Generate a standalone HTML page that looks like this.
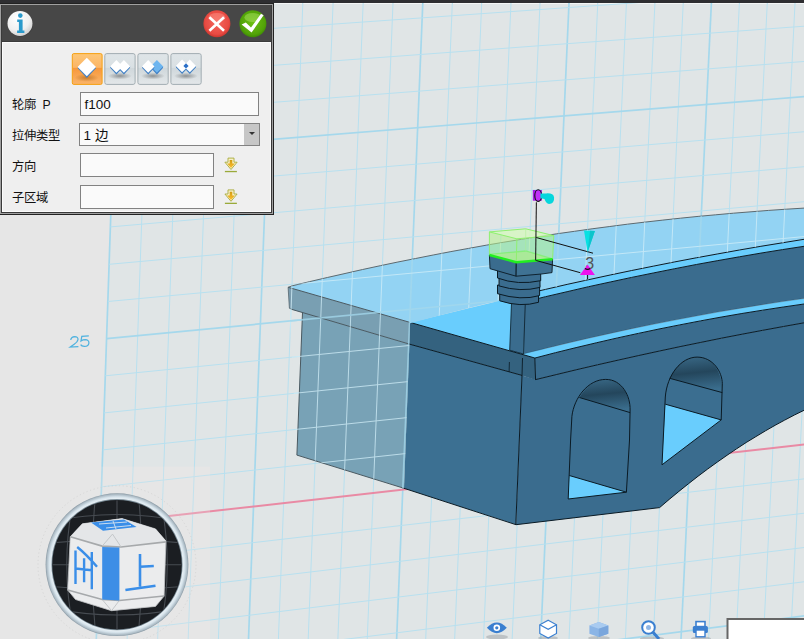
<!DOCTYPE html>
<html lang="zh-CN"><head><meta charset="utf-8">
<style>
html,body{margin:0;padding:0;width:804px;height:639px;overflow:hidden;background:#2e2e30;font-family:"Liberation Sans",sans-serif;}
#scene{position:absolute;left:0;top:0;}
#panel{position:absolute;left:0;top:3px;width:274px;height:212px;box-sizing:border-box;background:#222;}
#panel .g{position:absolute;left:1px;top:1px;right:1px;bottom:1px;background:#8e8e8e;}
#panel .d{position:absolute;left:2px;top:2px;right:2px;bottom:2px;background:#333;}
#panel .hdr{position:absolute;left:2px;top:2px;width:268px;height:36px;background:#474747;}
#panel .body{position:absolute;left:3px;top:39px;width:267px;height:170px;background:#efefef;border-right:1px solid #fff;border-bottom:1px solid #fff;box-sizing:border-box;}
.lbl{position:absolute;left:11.6px;font-size:12.3px;color:#111;line-height:14px;white-space:nowrap;}
.inp{position:absolute;box-sizing:border-box;border:1px solid #828282;background:#fafafa;font-size:13.5px;color:#111;line-height:23px;padding-left:3.5px;}
</style></head><body>
<svg id="scene" width="804" height="639" viewBox="0 0 804 639">
<rect x="0" y="3" width="804" height="636" fill="#e6e6e6"/>
<polygon points="152.3,-1002.2 1556.7,-973.5 1405.7,1325.1 63.5,1601.3" fill="#e0e5e6"/>
<rect x="274" y="3" width="530" height="1" fill="#f4f6f6"/>
<rect x="0" y="466.6" width="210" height="173" fill="#e6e6e6"/>
<g><line x1="139.0" y1="-610.7" x2="81.6" y2="1069.3" stroke="#a5d8ec" stroke-width="1.7"/>
<line x1="170.7" y1="-611.1" x2="112.3" y2="1064.4" stroke="#b8e0ef" stroke-width="1.0"/>
<line x1="202.2" y1="-611.6" x2="142.7" y2="1059.6" stroke="#b8e0ef" stroke-width="1.0"/>
<line x1="233.5" y1="-612.0" x2="173.1" y2="1054.7" stroke="#b8e0ef" stroke-width="1.0"/>
<line x1="264.7" y1="-612.4" x2="203.2" y2="1049.9" stroke="#b8e0ef" stroke-width="1.0"/>
<line x1="295.7" y1="-612.8" x2="233.2" y2="1045.1" stroke="#a5d8ec" stroke-width="1.7"/>
<line x1="326.5" y1="-613.3" x2="263.0" y2="1040.3" stroke="#b8e0ef" stroke-width="1.0"/>
<line x1="357.2" y1="-613.7" x2="292.7" y2="1035.6" stroke="#b8e0ef" stroke-width="1.0"/>
<line x1="387.7" y1="-614.1" x2="322.3" y2="1030.9" stroke="#b8e0ef" stroke-width="1.0"/>
<line x1="418.0" y1="-614.5" x2="351.6" y2="1026.2" stroke="#b8e0ef" stroke-width="1.0"/>
<line x1="448.2" y1="-614.9" x2="380.9" y2="1021.5" stroke="#a5d8ec" stroke-width="1.7"/>
<line x1="478.2" y1="-615.4" x2="409.9" y2="1016.9" stroke="#b8e0ef" stroke-width="1.0"/>
<line x1="508.0" y1="-615.8" x2="438.8" y2="1012.2" stroke="#b8e0ef" stroke-width="1.0"/>
<line x1="537.7" y1="-616.2" x2="467.6" y2="1007.6" stroke="#b8e0ef" stroke-width="1.0"/>
<line x1="567.2" y1="-616.6" x2="496.2" y2="1003.1" stroke="#b8e0ef" stroke-width="1.0"/>
<line x1="596.6" y1="-617.0" x2="524.7" y2="998.5" stroke="#a5d8ec" stroke-width="1.7"/>
<line x1="625.8" y1="-617.4" x2="553.0" y2="994.0" stroke="#b8e0ef" stroke-width="1.0"/>
<line x1="654.9" y1="-617.8" x2="581.2" y2="989.5" stroke="#b8e0ef" stroke-width="1.0"/>
<line x1="683.8" y1="-618.2" x2="609.3" y2="985.0" stroke="#b8e0ef" stroke-width="1.0"/>
<line x1="712.5" y1="-618.6" x2="637.2" y2="980.5" stroke="#b8e0ef" stroke-width="1.0"/>
<line x1="741.1" y1="-619.0" x2="664.9" y2="976.1" stroke="#a5d8ec" stroke-width="1.7"/>
<line x1="769.5" y1="-619.4" x2="692.5" y2="971.7" stroke="#b8e0ef" stroke-width="1.0"/>
<line x1="797.8" y1="-619.8" x2="720.0" y2="967.3" stroke="#b8e0ef" stroke-width="1.0"/>
<line x1="826.0" y1="-620.1" x2="747.3" y2="962.9" stroke="#b8e0ef" stroke-width="1.0"/>
<line x1="854.0" y1="-620.5" x2="774.5" y2="958.6" stroke="#b8e0ef" stroke-width="1.0"/>
<line x1="881.9" y1="-620.9" x2="801.6" y2="954.2" stroke="#a5d8ec" stroke-width="1.7"/>
<line x1="909.6" y1="-621.3" x2="828.5" y2="949.9" stroke="#b8e0ef" stroke-width="1.0"/>
<line x1="937.1" y1="-621.7" x2="855.3" y2="945.7" stroke="#b8e0ef" stroke-width="1.0"/>
<line x1="964.6" y1="-622.1" x2="882.0" y2="941.4" stroke="#b8e0ef" stroke-width="1.0"/>
<line x1="991.8" y1="-622.4" x2="908.5" y2="937.2" stroke="#b8e0ef" stroke-width="1.0"/>
<line x1="1019.0" y1="-622.8" x2="934.9" y2="932.9" stroke="#a5d8ec" stroke-width="1.7"/>
<line x1="1046.0" y1="-623.2" x2="961.2" y2="928.7" stroke="#b8e0ef" stroke-width="1.0"/>
<line x1="1072.9" y1="-623.5" x2="987.3" y2="924.6" stroke="#b8e0ef" stroke-width="1.0"/>
<line x1="1099.6" y1="-623.9" x2="1013.3" y2="920.4" stroke="#b8e0ef" stroke-width="1.0"/>
<line x1="1126.2" y1="-624.3" x2="1039.2" y2="916.3" stroke="#b8e0ef" stroke-width="1.0"/>
<line x1="1152.7" y1="-624.6" x2="1065.0" y2="912.1" stroke="#a5d8ec" stroke-width="1.7"/>
<line x1="1179.0" y1="-625.0" x2="1090.6" y2="908.0" stroke="#b8e0ef" stroke-width="1.0"/>
<line x1="1205.2" y1="-625.4" x2="1116.1" y2="904.0" stroke="#b8e0ef" stroke-width="1.0"/>
<line x1="1231.3" y1="-625.7" x2="1141.5" y2="899.9" stroke="#b8e0ef" stroke-width="1.0"/>
<line x1="1257.2" y1="-626.1" x2="1166.7" y2="895.9" stroke="#b8e0ef" stroke-width="1.0"/>
<line x1="139.0" y1="-610.7" x2="1534.1" y2="-629.9" stroke="#a5d8ec" stroke-width="1.7"/>
<line x1="137.7" y1="-571.9" x2="1531.9" y2="-595.8" stroke="#b8e0ef" stroke-width="1.0"/>
<line x1="136.3" y1="-533.2" x2="1529.6" y2="-561.8" stroke="#b8e0ef" stroke-width="1.0"/>
<line x1="135.0" y1="-494.6" x2="1527.4" y2="-527.9" stroke="#b8e0ef" stroke-width="1.0"/>
<line x1="133.7" y1="-456.0" x2="1525.2" y2="-494.0" stroke="#b8e0ef" stroke-width="1.0"/>
<line x1="132.4" y1="-417.5" x2="1523.0" y2="-460.1" stroke="#a5d8ec" stroke-width="1.7"/>
<line x1="131.1" y1="-379.0" x2="1520.7" y2="-426.3" stroke="#b8e0ef" stroke-width="1.0"/>
<line x1="129.8" y1="-340.7" x2="1518.5" y2="-392.6" stroke="#b8e0ef" stroke-width="1.0"/>
<line x1="128.5" y1="-302.4" x2="1516.3" y2="-358.9" stroke="#b8e0ef" stroke-width="1.0"/>
<line x1="127.1" y1="-264.1" x2="1514.1" y2="-325.2" stroke="#b8e0ef" stroke-width="1.0"/>
<line x1="125.8" y1="-226.0" x2="1511.9" y2="-291.6" stroke="#a5d8ec" stroke-width="1.7"/>
<line x1="124.5" y1="-187.9" x2="1509.7" y2="-258.1" stroke="#b8e0ef" stroke-width="1.0"/>
<line x1="123.2" y1="-149.8" x2="1507.5" y2="-224.6" stroke="#b8e0ef" stroke-width="1.0"/>
<line x1="121.9" y1="-111.9" x2="1505.3" y2="-191.1" stroke="#b8e0ef" stroke-width="1.0"/>
<line x1="120.7" y1="-74.0" x2="1503.1" y2="-157.7" stroke="#b8e0ef" stroke-width="1.0"/>
<line x1="119.4" y1="-36.1" x2="1500.9" y2="-124.4" stroke="#a5d8ec" stroke-width="1.7"/>
<line x1="118.1" y1="1.7" x2="1498.7" y2="-91.1" stroke="#b8e0ef" stroke-width="1.0"/>
<line x1="116.8" y1="39.4" x2="1496.5" y2="-57.9" stroke="#b8e0ef" stroke-width="1.0"/>
<line x1="115.5" y1="77.0" x2="1494.4" y2="-24.7" stroke="#b8e0ef" stroke-width="1.0"/>
<line x1="114.2" y1="114.6" x2="1492.2" y2="8.5" stroke="#b8e0ef" stroke-width="1.0"/>
<line x1="112.9" y1="152.1" x2="1490.0" y2="41.6" stroke="#a5d8ec" stroke-width="1.7"/>
<line x1="111.7" y1="189.6" x2="1487.8" y2="74.6" stroke="#b8e0ef" stroke-width="1.0"/>
<line x1="110.4" y1="226.9" x2="1485.7" y2="107.6" stroke="#b8e0ef" stroke-width="1.0"/>
<line x1="109.1" y1="264.3" x2="1483.5" y2="140.5" stroke="#b8e0ef" stroke-width="1.0"/>
<line x1="107.8" y1="301.5" x2="1481.3" y2="173.4" stroke="#b8e0ef" stroke-width="1.0"/>
<line x1="106.6" y1="338.7" x2="1479.2" y2="206.2" stroke="#a5d8ec" stroke-width="1.7"/>
<line x1="105.3" y1="375.8" x2="1477.0" y2="239.0" stroke="#b8e0ef" stroke-width="1.0"/>
<line x1="104.0" y1="412.9" x2="1474.9" y2="271.8" stroke="#b8e0ef" stroke-width="1.0"/>
<line x1="102.8" y1="449.9" x2="1472.7" y2="304.5" stroke="#b8e0ef" stroke-width="1.0"/>
<line x1="101.5" y1="486.8" x2="1470.6" y2="337.1" stroke="#b8e0ef" stroke-width="1.0"/>
<line x1="100.2" y1="523.7" x2="1468.5" y2="369.7" stroke="#e98aa4" stroke-width="2.0"/>
<line x1="99.0" y1="560.5" x2="1466.3" y2="402.2" stroke="#b8e0ef" stroke-width="1.0"/>
<line x1="97.7" y1="597.3" x2="1464.2" y2="434.7" stroke="#b8e0ef" stroke-width="1.0"/>
<line x1="96.5" y1="633.9" x2="1462.0" y2="467.2" stroke="#b8e0ef" stroke-width="1.0"/>
<line x1="95.2" y1="670.6" x2="1459.9" y2="499.6" stroke="#b8e0ef" stroke-width="1.0"/>
<line x1="94.0" y1="707.1" x2="1457.8" y2="531.9" stroke="#a5d8ec" stroke-width="1.7"/>
<line x1="92.7" y1="743.6" x2="1455.7" y2="564.2" stroke="#b8e0ef" stroke-width="1.0"/>
<line x1="91.5" y1="780.1" x2="1453.6" y2="596.5" stroke="#b8e0ef" stroke-width="1.0"/>
<line x1="90.3" y1="816.4" x2="1451.4" y2="628.7" stroke="#b8e0ef" stroke-width="1.0"/>
<line x1="89.0" y1="852.7" x2="1449.3" y2="660.8" stroke="#b8e0ef" stroke-width="1.0"/>
<line x1="87.8" y1="889.0" x2="1447.2" y2="692.9" stroke="#a5d8ec" stroke-width="1.7"/>
<line x1="86.5" y1="925.2" x2="1445.1" y2="725.0" stroke="#b8e0ef" stroke-width="1.0"/>
<line x1="85.3" y1="961.3" x2="1443.0" y2="757.0" stroke="#b8e0ef" stroke-width="1.0"/>
<line x1="84.1" y1="997.4" x2="1440.9" y2="788.9" stroke="#b8e0ef" stroke-width="1.0"/>
<line x1="82.8" y1="1033.4" x2="1438.8" y2="820.9" stroke="#b8e0ef" stroke-width="1.0"/></g>
<rect x="0" y="466.6" width="210" height="173" fill="#e6e6e6" fill-opacity="0.25"/>
<polygon points="410,322.4 540,291 545,356 534.8,358" fill="#69cdfd"/>
<polygon points="409.4,344.1 522,375.4 515.8,524.5 404,488.3" fill="#3c7092"/>
<polygon points="522.0,375.4 535.6,379.6 556.2,374.6 576.9,369.6 597.5,364.8 618.2,360.1 638.8,355.5 659.5,351.0 680.1,346.6 700.8,342.4 721.4,338.2 742.1,334.2 762.7,330.3 783.4,326.5 804.0,322.8 804.0,410.3 794.4,415.0 784.7,420.1 775.1,425.3 765.5,430.8 755.9,436.6 746.2,442.5 736.6,448.8 727.0,455.3 717.4,462.0 707.7,469.0 698.1,476.2 688.5,483.7 678.9,491.4 669.2,499.4 659.6,507.6 516.0,524.7" fill="#3a6c8e"/>
<polygon points="410,322.4 534.8,358 535.6,380 522,375.4 409.4,344.1" fill="#34627f"/>
<polygon points="534.7,358.1 555.4,352.7 576.1,347.6 596.8,342.7 617.6,337.9 638.3,333.4 659.0,329.0 679.7,324.9 700.4,320.9 721.1,317.1 741.9,313.5 762.6,310.2 783.3,307.0 804.0,304.0 804.0,322.8 783.4,326.5 762.7,330.3 742.1,334.2 721.4,338.2 700.8,342.4 680.1,346.6 659.5,351.0 638.8,355.5 618.2,360.1 597.5,364.8 576.9,369.6 556.2,374.6 535.6,379.6" fill="#3a6c8e"/>
<polygon points="524.0,353.7 545.5,348.4 567.1,343.2 588.6,338.2 610.2,333.4 631.7,328.7 653.2,324.3 674.8,320.1 696.3,316.0 717.8,312.1 739.4,308.4 760.9,304.9 782.5,301.6 804.0,298.5 804.0,304.0 783.3,307.0 762.6,310.2 741.9,313.5 721.1,317.1 700.4,320.9 679.7,324.9 659.0,329.0 638.3,333.4 617.6,337.9 596.8,342.7 576.1,347.6 555.4,352.7 534.7,358.1" fill="#69cdfd"/>
<polygon points="524.0,302.0 545.5,296.7 567.1,291.7 588.6,286.7 610.2,282.0 631.7,277.4 653.2,273.0 674.8,268.7 696.3,264.5 717.8,260.6 739.4,256.8 760.9,253.1 782.5,249.6 804.0,246.3 804.0,298.5 782.5,301.6 760.9,304.9 739.4,308.4 717.8,312.1 696.3,316.0 674.8,320.1 653.2,324.3 631.7,328.7 610.2,333.4 588.6,338.2 567.1,343.2 545.5,348.4 524.0,353.7" fill="#3a6c8e"/>
<polygon points="524.0,294.4 545.5,289.4 567.1,284.4 588.6,279.7 610.2,275.0 631.7,270.5 653.2,266.2 674.8,261.9 696.3,257.8 717.8,253.9 739.4,250.0 760.9,246.3 782.5,242.8 804.0,239.3 804.0,246.3 782.5,249.6 760.9,253.1 739.4,256.8 717.8,260.6 696.3,264.5 674.8,268.7 653.2,273.0 631.7,277.4 610.2,282.0 588.6,286.7 567.1,291.7 545.5,296.7 524.0,302.0" fill="#69cdfd"/>
<defs><linearGradient id="ceil" x1="0" y1="0" x2="0.15" y2="1"><stop offset="0" stop-color="#3a6a88"/><stop offset="0.5" stop-color="#24465c"/><stop offset="1" stop-color="#3a6d8d"/></linearGradient></defs>
<path d="M568.2,499 L570.6,440 L571.9,416.3 C574,398 588,379.4 605.7,379.4 C622,379.4 630.5,396 630.1,410 L629.5,440 L626.4,492.2 Z" fill="#3b6e90"/>
<path d="M579.4,397.5 C586,386 596,379.4 605.7,379.4 C622,379.4 630.5,396 630.1,412.6 Z" fill="url(#ceil)"/>
<polygon points="569.3,475.5 626.4,492.2 568.2,499" fill="#69cdfd"/>
<path d="M568.2,499 L570.6,440 L571.9,416.3 C574,398 588,379.4 605.7,379.4 C622,379.4 630.5,396 630.1,410 L629.5,440 L626.4,492.2 Z" fill="none" stroke="#0a1a24" stroke-width="1"/>
<path d="M579.4,397.5 L630.1,412.6 M569.3,475.5 L626.4,492.2" stroke="#0a1a24" stroke-width="1"/>
<path d="M662,464.8 L665.3,397 C667,375 681,357.1 697.1,357.1 C713,357.1 722.3,372 722.3,383.8 L721.2,419.9 Z" fill="#3b6e90"/>
<path d="M669.7,378.3 C675,366 686,357.1 697.1,357.1 C713,357.1 722.3,372 722.3,392.6 Z" fill="url(#ceil)"/>
<polygon points="665.3,404.2 721.2,419.9 662,464.8" fill="#69cdfd"/>
<path d="M662,464.8 L665.3,397 C667,375 681,357.1 697.1,357.1 C713,357.1 722.3,372 722.3,383.8 L721.2,419.9 Z" fill="none" stroke="#0a1a24" stroke-width="1"/>
<path d="M669.7,378.3 L722.3,392.6 M665.3,404.2 L721.2,419.9" stroke="#0a1a24" stroke-width="1"/>
<polyline points="535.6,379.6 556.2,374.6 576.9,369.6 597.5,364.8 618.2,360.1 638.8,355.5 659.5,351.0 680.1,346.6 700.8,342.4 721.4,338.2 742.1,334.2 762.7,330.3 783.4,326.5 804.0,322.8" fill="none" stroke="#0a1a24" stroke-width="1"/>
<polyline points="534.7,358.1 555.4,352.7 576.1,347.6 596.8,342.7 617.6,337.9 638.3,333.4 659.0,329.0 679.7,324.9 700.4,320.9 721.1,317.1 741.9,313.5 762.6,310.2 783.3,307.0 804.0,304.0" fill="none" stroke="#0a1a24" stroke-width="1"/>
<polyline points="524.0,353.7 545.5,348.4 567.1,343.2 588.6,338.2 610.2,333.4 631.7,328.7 653.2,324.3 674.8,320.1 696.3,316.0 717.8,312.1 739.4,308.4 760.9,304.9 782.5,301.6 804.0,298.5" fill="none" stroke="#0a1a24" stroke-width="0.5" opacity="0.4"/>
<polyline points="524.0,302.0 545.5,296.7 567.1,291.7 588.6,286.7 610.2,282.0 631.7,277.4 653.2,273.0 674.8,268.7 696.3,264.5 717.8,260.6 739.4,256.8 760.9,253.1 782.5,249.6 804.0,246.3" fill="none" stroke="#0a1a24" stroke-width="1"/>
<polyline points="410,322.4 534.8,358 535.6,380" fill="none" stroke="#0a1a24" stroke-width="1"/>
<polyline points="409.4,344.1 522,375.4 515.8,524.5" fill="none" stroke="#0a1a24" stroke-width="1"/>
<polyline points="804.0,410.3 794.4,415.0 784.7,420.1 775.1,425.3 765.5,430.8 755.9,436.6 746.2,442.5 736.6,448.8 727.0,455.3 717.4,462.0 707.7,469.0 698.1,476.2 688.5,483.7 678.9,491.4 669.2,499.4 659.6,507.6 516.0,524.7 404,488.3" fill="none" stroke="#0a1a24" stroke-width="1"/>
<line x1="509.4" y1="362" x2="509.1" y2="372" stroke="#0a1a24" stroke-width="0.8"/>
<line x1="522.5" y1="358" x2="522" y2="376" stroke="#0a1a24" stroke-width="0.9"/>
<polygon points="288.1,287.3 292.0,285.9 309.7,281.6 327.3,277.5 345.0,273.5 362.6,269.5 380.3,265.7 397.9,262.0 415.6,258.5 433.2,255.0 450.9,251.6 468.6,248.4 486.2,245.2 503.9,242.2 521.5,239.3 539.2,236.5 556.8,233.8 574.5,231.3 592.1,228.8 609.8,226.5 627.4,224.2 645.1,222.1 662.8,220.1 680.4,218.2 698.1,216.4 715.7,214.8 733.4,213.2 751.0,211.8 768.7,210.4 786.3,209.2 804.0,208.1 804.0,240.0 773.7,244.2 743.4,249.3 713.1,254.7 682.8,260.4 652.5,266.3 622.2,272.5 591.8,279.0 561.5,285.7 531.2,292.7 500.9,299.9 470.6,307.4 440.3,315.2 410.0,323.3 410.0,322.4 291.3,288.2" fill="#93d3f3"/>
<polygon points="288.1,287.3 291.3,288.2 291.9,309.4 289.4,308.2" fill="#7b9cae"/>
<polygon points="291.3,288.2 410,322.4 409.4,344.1 291.9,309.4" fill="#7a9fb2"/>
<polygon points="302.5,312.6 409.4,344.1 404,488.3 296.9,455.1" fill="#79a2b6"/>
<polyline points="288.1,287.3 292.0,285.9 309.7,281.6 327.3,277.5 345.0,273.5 362.6,269.5 380.3,265.7 397.9,262.0 415.6,258.5 433.2,255.0 450.9,251.6 468.6,248.4 486.2,245.2 503.9,242.2 521.5,239.3 539.2,236.5 556.8,233.8 574.5,231.3 592.1,228.8 609.8,226.5 627.4,224.2 645.1,222.1 662.8,220.1 680.4,218.2 698.1,216.4 715.7,214.8 733.4,213.2 751.0,211.8 768.7,210.4 786.3,209.2 804.0,208.1" fill="none" stroke="#5d6a70" stroke-width="1"/>
<polyline points="288.1,287.3 291.3,288.2 410,322.4" fill="none" stroke="#4a5a62" stroke-width="1"/>
<polyline points="289.4,308.2 291.9,309.4 409.4,344.1" fill="none" stroke="#4a5a62" stroke-width="1"/>
<polyline points="288.1,287.3 289.4,308.2" fill="none" stroke="#56666e" stroke-width="0.8"/>
<polyline points="302.5,312.6 296.9,455.1 404,488.3" fill="none" stroke="#4a5a62" stroke-width="1"/>
<polyline points="524.0,294.4 545.5,289.4 567.1,284.4 588.6,279.7 610.2,275.0 631.7,270.5 653.2,266.2 674.8,261.9 696.3,257.8 717.8,253.9 739.4,250.0 760.9,246.3 782.5,242.8 804.0,239.3" fill="none" stroke="#0a1a24" stroke-width="1"/>
<clipPath id="fadeclip"><polygon points="288.1,287.3 292.0,285.9 309.7,281.6 327.3,277.5 345.0,273.5 362.6,269.5 380.3,265.7 397.9,262.0 415.6,258.5 433.2,255.0 450.9,251.6 468.6,248.4 486.2,245.2 503.9,242.2 521.5,239.3 539.2,236.5 556.8,233.8 574.5,231.3 592.1,228.8 609.8,226.5 627.4,224.2 645.1,222.1 662.8,220.1 680.4,218.2 698.1,216.4 715.7,214.8 733.4,213.2 751.0,211.8 768.7,210.4 786.3,209.2 804.0,208.1 804.0,240.0 773.7,244.2 743.4,249.3 713.1,254.7 682.8,260.4 652.5,266.3 622.2,272.5 591.8,279.0 561.5,285.7 531.2,292.7 500.9,299.9 470.6,307.4 440.3,315.2 410.0,323.3 410.0,322.4 291.3,288.2"/><polygon points="288.1,287.3 291.3,288.2 410,322.4 404,488.3 296.9,455.1 289.4,308.2"/></clipPath>
<g clip-path="url(#fadeclip)" opacity="0.75"><line x1="139.0" y1="-610.7" x2="81.6" y2="1069.3" stroke="#a5d8ec" stroke-width="1.7"/>
<line x1="170.7" y1="-611.1" x2="112.3" y2="1064.4" stroke="#d2eef8" stroke-width="1.0"/>
<line x1="202.2" y1="-611.6" x2="142.7" y2="1059.6" stroke="#d2eef8" stroke-width="1.0"/>
<line x1="233.5" y1="-612.0" x2="173.1" y2="1054.7" stroke="#d2eef8" stroke-width="1.0"/>
<line x1="264.7" y1="-612.4" x2="203.2" y2="1049.9" stroke="#d2eef8" stroke-width="1.0"/>
<line x1="295.7" y1="-612.8" x2="233.2" y2="1045.1" stroke="#a5d8ec" stroke-width="1.7"/>
<line x1="326.5" y1="-613.3" x2="263.0" y2="1040.3" stroke="#d2eef8" stroke-width="1.0"/>
<line x1="357.2" y1="-613.7" x2="292.7" y2="1035.6" stroke="#d2eef8" stroke-width="1.0"/>
<line x1="387.7" y1="-614.1" x2="322.3" y2="1030.9" stroke="#d2eef8" stroke-width="1.0"/>
<line x1="418.0" y1="-614.5" x2="351.6" y2="1026.2" stroke="#d2eef8" stroke-width="1.0"/>
<line x1="448.2" y1="-614.9" x2="380.9" y2="1021.5" stroke="#a5d8ec" stroke-width="1.7"/>
<line x1="478.2" y1="-615.4" x2="409.9" y2="1016.9" stroke="#d2eef8" stroke-width="1.0"/>
<line x1="508.0" y1="-615.8" x2="438.8" y2="1012.2" stroke="#d2eef8" stroke-width="1.0"/>
<line x1="537.7" y1="-616.2" x2="467.6" y2="1007.6" stroke="#d2eef8" stroke-width="1.0"/>
<line x1="567.2" y1="-616.6" x2="496.2" y2="1003.1" stroke="#d2eef8" stroke-width="1.0"/>
<line x1="596.6" y1="-617.0" x2="524.7" y2="998.5" stroke="#a5d8ec" stroke-width="1.7"/>
<line x1="625.8" y1="-617.4" x2="553.0" y2="994.0" stroke="#d2eef8" stroke-width="1.0"/>
<line x1="654.9" y1="-617.8" x2="581.2" y2="989.5" stroke="#d2eef8" stroke-width="1.0"/>
<line x1="683.8" y1="-618.2" x2="609.3" y2="985.0" stroke="#d2eef8" stroke-width="1.0"/>
<line x1="712.5" y1="-618.6" x2="637.2" y2="980.5" stroke="#d2eef8" stroke-width="1.0"/>
<line x1="741.1" y1="-619.0" x2="664.9" y2="976.1" stroke="#a5d8ec" stroke-width="1.7"/>
<line x1="769.5" y1="-619.4" x2="692.5" y2="971.7" stroke="#d2eef8" stroke-width="1.0"/>
<line x1="797.8" y1="-619.8" x2="720.0" y2="967.3" stroke="#d2eef8" stroke-width="1.0"/>
<line x1="826.0" y1="-620.1" x2="747.3" y2="962.9" stroke="#d2eef8" stroke-width="1.0"/>
<line x1="854.0" y1="-620.5" x2="774.5" y2="958.6" stroke="#d2eef8" stroke-width="1.0"/>
<line x1="881.9" y1="-620.9" x2="801.6" y2="954.2" stroke="#a5d8ec" stroke-width="1.7"/>
<line x1="909.6" y1="-621.3" x2="828.5" y2="949.9" stroke="#d2eef8" stroke-width="1.0"/>
<line x1="937.1" y1="-621.7" x2="855.3" y2="945.7" stroke="#d2eef8" stroke-width="1.0"/>
<line x1="964.6" y1="-622.1" x2="882.0" y2="941.4" stroke="#d2eef8" stroke-width="1.0"/>
<line x1="991.8" y1="-622.4" x2="908.5" y2="937.2" stroke="#d2eef8" stroke-width="1.0"/>
<line x1="1019.0" y1="-622.8" x2="934.9" y2="932.9" stroke="#a5d8ec" stroke-width="1.7"/>
<line x1="1046.0" y1="-623.2" x2="961.2" y2="928.7" stroke="#d2eef8" stroke-width="1.0"/>
<line x1="1072.9" y1="-623.5" x2="987.3" y2="924.6" stroke="#d2eef8" stroke-width="1.0"/>
<line x1="1099.6" y1="-623.9" x2="1013.3" y2="920.4" stroke="#d2eef8" stroke-width="1.0"/>
<line x1="1126.2" y1="-624.3" x2="1039.2" y2="916.3" stroke="#d2eef8" stroke-width="1.0"/>
<line x1="1152.7" y1="-624.6" x2="1065.0" y2="912.1" stroke="#a5d8ec" stroke-width="1.7"/>
<line x1="1179.0" y1="-625.0" x2="1090.6" y2="908.0" stroke="#d2eef8" stroke-width="1.0"/>
<line x1="1205.2" y1="-625.4" x2="1116.1" y2="904.0" stroke="#d2eef8" stroke-width="1.0"/>
<line x1="1231.3" y1="-625.7" x2="1141.5" y2="899.9" stroke="#d2eef8" stroke-width="1.0"/>
<line x1="1257.2" y1="-626.1" x2="1166.7" y2="895.9" stroke="#d2eef8" stroke-width="1.0"/>
<line x1="139.0" y1="-610.7" x2="1534.1" y2="-629.9" stroke="#a5d8ec" stroke-width="1.7"/>
<line x1="137.7" y1="-571.9" x2="1531.9" y2="-595.8" stroke="#d2eef8" stroke-width="1.0"/>
<line x1="136.3" y1="-533.2" x2="1529.6" y2="-561.8" stroke="#d2eef8" stroke-width="1.0"/>
<line x1="135.0" y1="-494.6" x2="1527.4" y2="-527.9" stroke="#d2eef8" stroke-width="1.0"/>
<line x1="133.7" y1="-456.0" x2="1525.2" y2="-494.0" stroke="#d2eef8" stroke-width="1.0"/>
<line x1="132.4" y1="-417.5" x2="1523.0" y2="-460.1" stroke="#a5d8ec" stroke-width="1.7"/>
<line x1="131.1" y1="-379.0" x2="1520.7" y2="-426.3" stroke="#d2eef8" stroke-width="1.0"/>
<line x1="129.8" y1="-340.7" x2="1518.5" y2="-392.6" stroke="#d2eef8" stroke-width="1.0"/>
<line x1="128.5" y1="-302.4" x2="1516.3" y2="-358.9" stroke="#d2eef8" stroke-width="1.0"/>
<line x1="127.1" y1="-264.1" x2="1514.1" y2="-325.2" stroke="#d2eef8" stroke-width="1.0"/>
<line x1="125.8" y1="-226.0" x2="1511.9" y2="-291.6" stroke="#a5d8ec" stroke-width="1.7"/>
<line x1="124.5" y1="-187.9" x2="1509.7" y2="-258.1" stroke="#d2eef8" stroke-width="1.0"/>
<line x1="123.2" y1="-149.8" x2="1507.5" y2="-224.6" stroke="#d2eef8" stroke-width="1.0"/>
<line x1="121.9" y1="-111.9" x2="1505.3" y2="-191.1" stroke="#d2eef8" stroke-width="1.0"/>
<line x1="120.7" y1="-74.0" x2="1503.1" y2="-157.7" stroke="#d2eef8" stroke-width="1.0"/>
<line x1="119.4" y1="-36.1" x2="1500.9" y2="-124.4" stroke="#a5d8ec" stroke-width="1.7"/>
<line x1="118.1" y1="1.7" x2="1498.7" y2="-91.1" stroke="#d2eef8" stroke-width="1.0"/>
<line x1="116.8" y1="39.4" x2="1496.5" y2="-57.9" stroke="#d2eef8" stroke-width="1.0"/>
<line x1="115.5" y1="77.0" x2="1494.4" y2="-24.7" stroke="#d2eef8" stroke-width="1.0"/>
<line x1="114.2" y1="114.6" x2="1492.2" y2="8.5" stroke="#d2eef8" stroke-width="1.0"/>
<line x1="112.9" y1="152.1" x2="1490.0" y2="41.6" stroke="#a5d8ec" stroke-width="1.7"/>
<line x1="111.7" y1="189.6" x2="1487.8" y2="74.6" stroke="#d2eef8" stroke-width="1.0"/>
<line x1="110.4" y1="226.9" x2="1485.7" y2="107.6" stroke="#d2eef8" stroke-width="1.0"/>
<line x1="109.1" y1="264.3" x2="1483.5" y2="140.5" stroke="#d2eef8" stroke-width="1.0"/>
<line x1="107.8" y1="301.5" x2="1481.3" y2="173.4" stroke="#d2eef8" stroke-width="1.0"/>
<line x1="106.6" y1="338.7" x2="1479.2" y2="206.2" stroke="#a5d8ec" stroke-width="1.7"/>
<line x1="105.3" y1="375.8" x2="1477.0" y2="239.0" stroke="#d2eef8" stroke-width="1.0"/>
<line x1="104.0" y1="412.9" x2="1474.9" y2="271.8" stroke="#d2eef8" stroke-width="1.0"/>
<line x1="102.8" y1="449.9" x2="1472.7" y2="304.5" stroke="#d2eef8" stroke-width="1.0"/>
<line x1="101.5" y1="486.8" x2="1470.6" y2="337.1" stroke="#d2eef8" stroke-width="1.0"/>
<line x1="100.2" y1="523.7" x2="1468.5" y2="369.7" stroke="#e98aa4" stroke-width="2.0"/>
<line x1="99.0" y1="560.5" x2="1466.3" y2="402.2" stroke="#d2eef8" stroke-width="1.0"/>
<line x1="97.7" y1="597.3" x2="1464.2" y2="434.7" stroke="#d2eef8" stroke-width="1.0"/>
<line x1="96.5" y1="633.9" x2="1462.0" y2="467.2" stroke="#d2eef8" stroke-width="1.0"/>
<line x1="95.2" y1="670.6" x2="1459.9" y2="499.6" stroke="#d2eef8" stroke-width="1.0"/>
<line x1="94.0" y1="707.1" x2="1457.8" y2="531.9" stroke="#a5d8ec" stroke-width="1.7"/>
<line x1="92.7" y1="743.6" x2="1455.7" y2="564.2" stroke="#d2eef8" stroke-width="1.0"/>
<line x1="91.5" y1="780.1" x2="1453.6" y2="596.5" stroke="#d2eef8" stroke-width="1.0"/>
<line x1="90.3" y1="816.4" x2="1451.4" y2="628.7" stroke="#d2eef8" stroke-width="1.0"/>
<line x1="89.0" y1="852.7" x2="1449.3" y2="660.8" stroke="#d2eef8" stroke-width="1.0"/>
<line x1="87.8" y1="889.0" x2="1447.2" y2="692.9" stroke="#a5d8ec" stroke-width="1.7"/>
<line x1="86.5" y1="925.2" x2="1445.1" y2="725.0" stroke="#d2eef8" stroke-width="1.0"/>
<line x1="85.3" y1="961.3" x2="1443.0" y2="757.0" stroke="#d2eef8" stroke-width="1.0"/>
<line x1="84.1" y1="997.4" x2="1440.9" y2="788.9" stroke="#d2eef8" stroke-width="1.0"/>
<line x1="82.8" y1="1033.4" x2="1438.8" y2="820.9" stroke="#d2eef8" stroke-width="1.0"/></g>
<polygon points="511.6,300 525.4,300 523.5,354 509.7,350.2" fill="#3a6c8e" stroke="#0a1a24" stroke-width="0.8"/>
<path d="M499.7,292 L499.7,300.8 Q520.7,307.6 538.5,302.3 L538.5,292 Z" fill="#3a6c8e" stroke="#0a1a24" stroke-width="1"/>
<path d="M497.5,285 L497.5,293.7 Q521.2,300.9 539.6,295.6 L539.6,285 Z" fill="#3a6c8e" stroke="#0a1a24" stroke-width="1"/>
<path d="M499.0,278 L499.0,285.9 Q520.3,292.5 540.0,287.4 L540.0,278 Z" fill="#3a6c8e" stroke="#0a1a24" stroke-width="1"/>
<path d="M497.5,266 L497.5,278.0 Q517.7,285.6 540.7,280.7 L540.7,266 Z" fill="#3a6c8e" stroke="#0a1a24" stroke-width="1"/>
<polygon points="489.4,255 516.3,262 516.1,276.2 490,268.7" fill="#3a6c8e" stroke="#0a1a24" stroke-width="0.9"/>
<polygon points="516.3,262 552.6,259 552,272.6 541.5,274 516.1,276.2" fill="#3f7293" stroke="#0a1a24" stroke-width="0.9"/>
<polygon points="489.4,254.4 525.7,251 552.6,258.8 516.3,261.9" fill="#9ee0a0" fill-opacity="0.9"/>
<polygon points="489.4,231.9 525.7,228.8 553.8,235.6 552.6,258.8 516.3,261.9 489.4,254.4" fill="#b4f08c" fill-opacity="0.55"/>
<polygon points="489.4,231.9 525.7,228.8 553.8,235.6 516.9,238.8" fill="#e6fcd6" fill-opacity="0.55"/>
<polyline points="489.4,254.4 525.7,251 552.6,258.8" fill="none" stroke="#7ef070" stroke-width="1.3" opacity="0.8"/>
<polyline points="489.4,231.9 525.7,228.8 553.8,235.6 516.9,238.8 489.4,231.9 489.4,254.4" fill="none" stroke="#8ff070" stroke-width="1"/>
<line x1="516.9" y1="238.8" x2="516.3" y2="261.9" stroke="#8ff070" stroke-width="1"/>
<line x1="553.8" y1="235.6" x2="552.6" y2="258.8" stroke="#8ff070" stroke-width="1"/>
<line x1="525.7" y1="228.8" x2="525.7" y2="251" stroke="#a8f090" stroke-width="0.8" opacity="0.6"/>
<polyline points="489.4,255 516.3,262.2 552.6,259.2" fill="none" stroke="#22ee22" stroke-width="2.4"/>
<line x1="536.4" y1="202.3" x2="535.6" y2="260.5" stroke="#222" stroke-width="1.1"/>
<line x1="536.2" y1="237.5" x2="593" y2="253.2" stroke="#111" stroke-width="1"/>
<line x1="536.2" y1="260.5" x2="580.3" y2="272.7" stroke="#111" stroke-width="1"/>
<rect x="532.8" y="190" width="9.1" height="10.7" fill="#a41ee8"/>
<ellipse cx="538.2" cy="195.6" rx="3.4" ry="5.8" fill="#c030f8" stroke="#111" stroke-width="1.1"/>
<path d="M540.4,193.6 L546,193.4 Q553.5,192.8 554.1,197.5 Q554.5,203.9 549,203.9 Q546,203.5 544.5,199 L540.4,198.3 Z" fill="#06d6dc"/>
<polygon points="584,230.5 594.9,231 587.6,252.3" fill="#08e0e2"/>
<polygon points="590,230.8 594.9,231 587.6,252.3" fill="#0cc4cc"/>
<text x="585.2" y="268.6" font-family="Liberation Sans, sans-serif" font-size="16" fill="#555">3</text>
<polygon points="587.6,264.5 594.9,275 579.9,275" fill="#ee12ee"/>
<path d="M584.9,268.6 Q587.6,270.2 590.3,268.6" stroke="#111" stroke-width="1.2" fill="none"/>
<line x1="587.6" y1="275" x2="587.6" y2="279" stroke="#111" stroke-width="1"/>
<path d="M70.6,339.8 Q71.4,336.8 74.6,336.6 Q78.2,336.7 78,339.6 Q77.7,341.8 74.2,344.2 L70.2,347.1 L78.4,346.6 M88.8,335.8 L81.8,336.3 L81.0,341.0 Q83,339.7 85.2,339.7 Q89.1,339.9 88.9,343.0 Q88.6,346.4 84.6,346.4 Q81.6,346.5 80.6,344.6" fill="none" stroke="#4fb2df" stroke-width="1.25"/>
<defs><radialGradient id="ringg" cx="0.5" cy="0.5" r="0.5"><stop offset="0.905" stop-color="#f4f9fc"/><stop offset="0.95" stop-color="#d6e3eb"/><stop offset="0.985" stop-color="#aab9c3"/><stop offset="1" stop-color="#8797a2"/></radialGradient></defs>
<circle cx="117" cy="564.7" r="79" fill="none" stroke="#cfcfcf" stroke-width="0.7" stroke-dasharray="1.2 2.5"/>
<circle cx="117" cy="564.7" r="71.4" fill="url(#ringg)"/>
<circle cx="117" cy="564.7" r="65.6" fill="#7d8f9a"/>
<circle cx="117" cy="564.7" r="64.8" fill="#1b1e22"/>
<clipPath id="cubeclip"><circle cx="117" cy="564.7" r="64.5"/></clipPath>
<g clip-path="url(#cubeclip)"><path d="M53.1,495 Q30.1,564.7 53.1,634" fill="none" stroke="#474c52" stroke-width="1.1"/><path d="M47,500.8 Q117,477.8 187,500.8" fill="none" stroke="#474c52" stroke-width="1.1"/><path d="M74.4,495 Q59.1,564.7 74.4,634" fill="none" stroke="#474c52" stroke-width="1.1"/><path d="M47,522.1 Q117,506.8 187,522.1" fill="none" stroke="#474c52" stroke-width="1.1"/><path d="M95.7,495 Q88.0,564.7 95.7,634" fill="none" stroke="#474c52" stroke-width="1.1"/><path d="M47,543.4 Q117,535.7 187,543.4" fill="none" stroke="#474c52" stroke-width="1.1"/><path d="M117.0,495 Q117.0,564.7 117.0,634" fill="none" stroke="#474c52" stroke-width="1.1"/><path d="M47,564.7 Q117,564.7 187,564.7" fill="none" stroke="#474c52" stroke-width="1.1"/><path d="M138.3,495 Q146.0,564.7 138.3,634" fill="none" stroke="#474c52" stroke-width="1.1"/><path d="M47,586.0 Q117,593.7 187,586.0" fill="none" stroke="#474c52" stroke-width="1.1"/><path d="M159.6,495 Q174.9,564.7 159.6,634" fill="none" stroke="#474c52" stroke-width="1.1"/><path d="M47,607.3 Q117,622.6 187,607.3" fill="none" stroke="#474c52" stroke-width="1.1"/><path d="M180.9,495 Q203.9,564.7 180.9,634" fill="none" stroke="#474c52" stroke-width="1.1"/><path d="M47,628.6 Q117,651.6 187,628.6" fill="none" stroke="#474c52" stroke-width="1.1"/></g>
<polygon points="70.3,536.7 82.4,523.8 122,518.6 155.5,528.9 165.9,541 164.1,596.1 155.5,606.4 111.6,610.7 75.5,599.5 67.7,590" fill="#ebeced" stroke="#c4c7c9" stroke-width="0.8"/>
<polygon points="70.3,536.7 82.4,523.8 122,518.6 155.5,528.9 165.9,541 121.1,547 102.2,546.1" fill="#e4e6e8"/>
<polyline points="70.3,536.7 102.2,546.1 121.1,547 165.9,541.8" fill="none" stroke="#a6a9ab" stroke-width="1.7"/>
<polyline points="67.7,590 102.2,599.5 119.4,600.4 164.1,596" fill="none" stroke="#a6a9ab" stroke-width="1.5"/>
<polyline points="102.2,546.1 112.5,534.1 121.1,547" fill="none" stroke="#c0c3c5" stroke-width="0.9"/>
<polyline points="102.2,599.5 111.6,610.7 119.4,600.4" fill="none" stroke="#c0c3c5" stroke-width="0.9"/>
<polygon points="102.2,547 119.4,547.5 119.4,600.4 102.2,599.5" fill="#3d8ee6"/>
<path d="M75.5,550.4 L75.5,584 M91.8,552 L91.8,589.2 M75.5,568.5 L91.8,570.2 M77.2,547 Q86,554 97,566.8 M84.1,558.2 L84.1,582.3" stroke="#3a8ee8" stroke-width="2.4" fill="none"/>
<path d="M140,553.9 L140,586.6 M140,566.8 L153.8,566 M125.4,590 L155.5,585.7" stroke="#3a8ee8" stroke-width="2.6" fill="none"/>
<path d="M91,522.5 L124,519.5 L136.6,527 L103,530.7 Z" fill="#3a8ee8"/>
<path d="M99,524 L127,522 M106,528 L131,525.5 M113,521 L116,529" stroke="#c9dcef" stroke-width="1"/>
<ellipse cx="497" cy="637" rx="11" ry="2.5" fill="#9aa0a4" opacity="0.5"/>
<path d="M486.9,627.8 Q496.8,617 506.8,627.8 Q496.8,638.5 486.9,627.8 Z" fill="#3a7fd0"/>
<circle cx="496.8" cy="627.8" r="3.3" fill="#fff"/><circle cx="496.8" cy="627.8" r="1.6" fill="#3a7fd0"/>
<ellipse cx="548" cy="638" rx="10" ry="2" fill="#9aa0a4" opacity="0.5"/>
<polygon points="548.2,620.3 556.5,624.8 556.5,633.5 548.2,638 539.8,633.5 539.8,624.8" fill="#fff" stroke="#3a7fd0" stroke-width="1.2"/>
<polyline points="539.8,624.8 548.2,629.3 556.5,624.8 M548.2,629.3 548.2,638" fill="none" stroke="#3a7fd0" stroke-width="1.1"/>
<ellipse cx="599" cy="638" rx="11" ry="2" fill="#9aa0a4" opacity="0.5"/>
<polygon points="598.8,622 608.3,625.5 608.3,633.8 598.8,637 589.4,633.8 589.4,625.5" fill="#8bb5e6"/>
<polygon points="589.4,625.5 598.8,622 608.3,625.5 598.8,628.8" fill="#a9cbf0"/>
<polygon points="598.8,628.8 608.3,625.5 608.3,633.8 598.8,637" fill="#7aa6dc"/>
<ellipse cx="652" cy="638.5" rx="12" ry="2" fill="#9aa0a4" opacity="0.5"/>
<circle cx="648.5" cy="627.5" r="6.3" fill="#fff" stroke="#3a7fd0" stroke-width="2"/>
<circle cx="648.5" cy="627.5" r="2.5" fill="#8fb6e6"/>
<line x1="652.8" y1="632" x2="659" y2="639" stroke="#3a7fd0" stroke-width="3"/>
<ellipse cx="701" cy="638.5" rx="10" ry="2" fill="#9aa0a4" opacity="0.5"/>
<rect x="696" y="621.6" width="9" height="5" fill="#fff" stroke="#3a7fd0" stroke-width="1.6"/>
<rect x="692.8" y="626" width="15.1" height="7" rx="1.5" fill="#3a7fd0"/>
<rect x="696" y="630" width="9" height="6.8" fill="#fff" stroke="#3a7fd0" stroke-width="1.4"/>
<rect x="727.5" y="619" width="78" height="22" fill="#fff" stroke="#666" stroke-width="2"/>
<rect x="0" y="0" width="804" height="3" fill="#2e2e31"/>
</svg>
<svg style="position:absolute;left:0;top:0" width="804" height="639" viewBox="0 0 804 639">
<rect x="0" y="3" width="274" height="212" fill="#222"/>
<rect x="0" y="4" width="273" height="210" fill="#a0a0a0"/>
<rect x="1" y="5" width="271" height="208" fill="#3a3a3a"/>
<rect x="2" y="5" width="269" height="36" fill="#474747"/>
<rect x="2" y="42" width="269" height="170" fill="#fbfbfb"/>
<rect x="3" y="43" width="267" height="168" fill="#efefef"/>
<defs><radialGradient id="infog" cx="0.4" cy="0.3" r="0.8"><stop offset="0" stop-color="#ffffff"/><stop offset="0.6" stop-color="#f0f0f0"/><stop offset="1" stop-color="#c4c4c4"/></radialGradient><radialGradient id="redg" cx="0.5" cy="0.45" r="0.55"><stop offset="0" stop-color="#f4675d"/><stop offset="0.8" stop-color="#e84a42"/><stop offset="1" stop-color="#c8362e"/></radialGradient><radialGradient id="grng" cx="0.5" cy="0.45" r="0.55"><stop offset="0" stop-color="#6dc012"/><stop offset="0.8" stop-color="#52a308"/><stop offset="1" stop-color="#3e8a04"/></radialGradient><linearGradient id="orng" x1="0" y1="0" x2="0" y2="1"><stop offset="0" stop-color="#fdc778"/><stop offset="0.45" stop-color="#fbb566"/><stop offset="0.46" stop-color="#f7973a"/><stop offset="1" stop-color="#fab46a"/></linearGradient><linearGradient id="gryg" x1="0" y1="0" x2="0" y2="1"><stop offset="0" stop-color="#dfe5e8"/><stop offset="0.45" stop-color="#d9e0e3"/><stop offset="0.46" stop-color="#cfd7db"/><stop offset="1" stop-color="#e3e7e9"/></linearGradient><radialGradient id="shad" cx="0.5" cy="0.5" r="0.5"><stop offset="0" stop-color="#000" stop-opacity="0.35"/><stop offset="1" stop-color="#000" stop-opacity="0"/></radialGradient><linearGradient id="dlg" x1="0" y1="0" x2="0" y2="1"><stop offset="0" stop-color="#d09a10"/><stop offset="1" stop-color="#ffc030"/></linearGradient></defs>
<circle cx="20.5" cy="24" r="12.5" fill="#2e2e2e" opacity="0.5"/>
<circle cx="20" cy="23.5" r="12.5" fill="url(#infog)"/>
<circle cx="20.3" cy="15.6" r="2.3" fill="#2b9acb"/>
<path d="M17.2,19.6 L22.6,19.6 L22.6,30.6 L24.4,30.6 L24.4,33 L17.1,33 L17.1,30.6 L18.9,30.6 L18.9,22 L17.2,22 Z" fill="#2b9acb"/>
<circle cx="216.9" cy="23.8" r="13.5" fill="url(#redg)"/>
<ellipse cx="216.9" cy="17.5" rx="8.5" ry="4.5" fill="#ff9a8e" opacity="0.45"/>
<path d="M209.4,17.2 L224,30.8 M224,17.2 L209.4,30.8" stroke="#fff" stroke-width="2.6"/>
<circle cx="252.9" cy="23.8" r="13.5" fill="url(#grng)"/>
<ellipse cx="252.9" cy="17.5" rx="8.5" ry="4.5" fill="#a8e060" opacity="0.5"/>
<path d="M241.6,24.6 L245.8,22.6 L251,27.6 L261,13.8 L263.6,15.2 L251.6,32.6 Z" fill="#fff"/>
<rect x="72.3" y="53.6" width="29.8" height="30.8" rx="1.5" fill="url(#orng)" stroke="#f5a012" stroke-width="1"/>
<defs><radialGradient id="oshad" cx="0.5" cy="0.5" r="0.5"><stop offset="0" stop-color="#8a4a00" stop-opacity="0.45"/><stop offset="1" stop-color="#8a4a00" stop-opacity="0"/></radialGradient></defs>
<ellipse cx="86.6" cy="77.8" rx="12" ry="4" fill="url(#oshad)"/>
<polygon points="77.6,67.2 77.9,68.6 86.8,77.9 95.7,68.6 96.0,67.2" fill="#3f7fc4"/><polygon points="86.8,57.8 96.0,67.0 86.8,76.2 77.6,67.0" fill="#fff"/>
<rect x="104.8" y="53.6" width="30.3" height="30.8" rx="2" fill="url(#gryg)" stroke="#a2adb2" stroke-width="1"/>
<ellipse cx="119.8" cy="76" rx="12" ry="3.4" fill="url(#shad)"/>
<rect x="137.9" y="53.6" width="30.3" height="30.8" rx="2" fill="url(#gryg)" stroke="#a2adb2" stroke-width="1"/>
<ellipse cx="152.9" cy="76" rx="12" ry="3.4" fill="url(#shad)"/>
<rect x="170.9" y="53.6" width="30.3" height="30.8" rx="2" fill="url(#gryg)" stroke="#a2adb2" stroke-width="1"/>
<ellipse cx="185.9" cy="76" rx="12" ry="3.4" fill="url(#shad)"/>
<polygon points="110.1,66.6 110.4,68.0 116.4,74.4 122.4,68.0 122.7,66.6" fill="#3f7fc4"/><polygon points="117.6,66.6 117.9,68.0 123.9,74.4 129.9,68.0 130.2,66.6" fill="#3f7fc4"/><polygon points="116.4,60.1 122.7,66.4 116.4,72.7 110.1,66.4" fill="#fff"/><polygon points="123.9,60.1 130.2,66.4 123.9,72.7 117.6,66.4" fill="#fff"/>
<polygon points="150.6,66.6 150.9,68.0 156.9,74.4 162.9,68.0 163.2,66.6" fill="#3f7fc4"/><polygon points="156.9,60.1 163.2,66.4 156.9,72.7 150.6,66.4" fill="#6db5ef"/><polygon points="141.9,66.6 142.2,68.0 148.2,74.4 154.2,68.0 154.5,66.6" fill="#3f7fc4"/><polygon points="148.2,60.1 154.5,66.4 148.2,72.7 141.9,66.4" fill="#fff"/>
<polygon points="175.8,66.1 176.1,67.5 182.1,73.9 188.1,67.5 188.4,66.1" fill="#3f7fc4"/><polygon points="183.5,66.1 183.8,67.5 189.8,73.9 195.8,67.5 196.1,66.1" fill="#3f7fc4"/><polygon points="182.1,59.6 188.4,65.9 182.1,72.2 175.8,65.9" fill="#fff"/><polygon points="189.8,59.6 196.1,65.9 189.8,72.2 183.5,65.9" fill="#fff"/><polygon points="186,63.3 188.6,65.9 186,68.5 183.4,65.9" fill="#2a6fc8"/>
<rect x="244.2" y="124" width="15" height="21" fill="#c6c6c6"/>
<polygon points="249,132 254,132 251.5,135" fill="#333"/>
<path d="M228,158.1 L234,158.1 L234,162.2 L237.1,162.2 L231,169.5 L224.9,162.2 L228,162.2 Z" fill="#f7f0c8" stroke="#a9ac3c" stroke-width="0.9"/>
<path d="M229.7,159.9 L232.3,159.9 L232.3,163.6 L234.8,163.6 L231,168.1 L227.2,163.6 L229.7,163.6 Z" fill="url(#dlg)"/>
<rect x="224.9" y="170.9" width="12" height="1.3" fill="#9aaa3a"/>
<path d="M228,189.9 L234,189.9 L234,194.0 L237.1,194.0 L231,201.3 L224.9,194.0 L228,194.0 Z" fill="#f7f0c8" stroke="#a9ac3c" stroke-width="0.9"/>
<path d="M229.7,191.7 L232.3,191.7 L232.3,195.4 L234.8,195.4 L231,199.9 L227.2,195.4 L229.7,195.4 Z" fill="url(#dlg)"/>
<rect x="224.9" y="202.7" width="12" height="1.3" fill="#9aaa3a"/>
</svg>
<div class="lbl" style="top:98px">轮廓&nbsp;&nbsp;P</div>
<div class="lbl" style="top:129px">拉伸类型</div>
<div class="lbl" style="top:160px">方向</div>
<div class="lbl" style="top:191px">子区域</div>
<div class="inp" style="left:80px;top:92px;width:179px;height:24px;">f100</div>
<div class="inp" style="left:79px;top:123px;width:181px;height:23px;border-right:none">1 边</div><div style="position:absolute;left:244px;top:124px;width:15px;height:21px;background:#c6c6c6;border-right:1px solid #828282"></div><div style="position:absolute;left:248.5px;top:132px;width:0;height:0;border-left:3px solid transparent;border-right:3px solid transparent;border-top:3.5px solid #333"></div>
<div class="inp" style="left:80px;top:153px;width:134px;height:24px;"></div>
<div class="inp" style="left:80px;top:185px;width:134px;height:24px;"></div>
</body></html>
